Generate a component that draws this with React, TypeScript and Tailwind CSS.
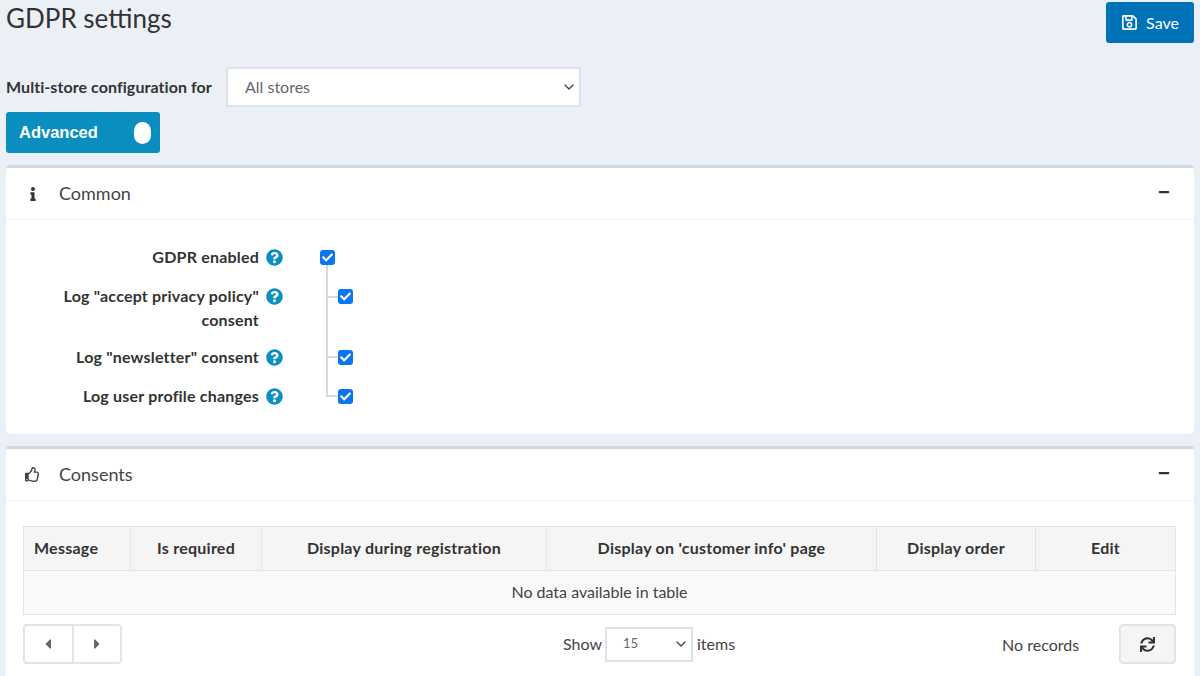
import React from 'react';
import { FaRegSave, FaInfo, FaRegThumbsUp, FaQuestionCircle, FaSync, FaMinus, FaCheck, FaCaretLeft, FaCaretRight } from 'react-icons/fa';
import { ChevronDown } from 'lucide-react';

const Help = () => <FaQuestionCircle className="text-[17px] text-[#0a8fc2] shrink-0" />;

const Check = () => (
  <span className="flex h-[15px] w-[15px] items-center justify-center rounded-[3px] bg-[#0a75f0]">
    <FaCheck className="text-[11px] text-white" />
  </span>
);

const CardHeader = ({ icon, title }: { icon: React.ReactNode; title: string }) => (
  <div className="flex h-[52px] items-center border-b border-[#f0f0f0] pl-[18px] pr-[24px]">
    <span className="flex w-[35px] items-center">{icon}</span>
    <span className="text-[18px] text-[#444]">{title}</span>
    <FaMinus className="ml-auto mb-[4px] text-[12px] text-[#333]" />
  </div>
);

const SettingRow = ({ label, second, nested, height }: { label: string; second?: string; nested?: boolean; height: string }) => (
  <div className={`flex items-start ${height}`}>
    <div className="-mt-[1px] w-[253px] text-right text-[16px] font-bold leading-[24px] tracking-[0.2px] text-[#333]">
      {label}
      {second && <div>{second}</div>}
    </div>
    <span className="ml-[7px] mt-[3px]"><Help /></span>
    <span className={`mt-[4px] ${nested ? 'ml-[55px]' : 'ml-[37px]'}`}><Check /></span>
  </div>
);

const th = 'border-r border-[#e4e4e4] pb-[2px] text-[16px] font-bold tracking-[0.25px] text-[#333]';

const App: React.FC = () => {
  return (
    <div className="h-[676px] overflow-hidden bg-[#ebeff6] px-[6px] font-['Lato','Noto_Sans',sans-serif] text-[#333]">
      <div className="flex h-[67px] items-start justify-between">
        <h1 className="text-[26px] leading-[36px] text-[#333]">GDPR settings</h1>
        <button className="mt-[2px] flex h-[41px] w-[88px] items-center justify-center gap-[8px] rounded-[3px] bg-[#0072b8] text-[16px] text-white">
          <FaRegSave className="text-[17px]" /> Save
        </button>
      </div>

      <div className="flex h-[40px] items-center">
        <span className="w-[220px] text-[16px] font-bold tracking-[0.07px] text-[#333]">Multi-store configuration for</span>
        <div className="flex h-[40px] w-[355px] items-center justify-between border-2 border-[#dde1e8] bg-white pl-[17px] pr-[2px] text-[16px] text-[#666]">
          All stores
          <ChevronDown size={16} className="text-[#444]" />
        </div>
      </div>

      <div className="mt-[5px] flex h-[41px] w-[154px] items-center justify-between rounded-[3px] bg-[#0a8ebf] pl-[13px] pr-[9px] font-['Liberation_Sans',sans-serif] text-[16.5px] font-bold text-white">
        Advanced
        <span className="h-[22px] w-[17px] rounded-[9px] bg-white" />
      </div>

      <div className="mt-[12px] h-[269px] rounded-[4px] border-t-[3px] border-[#d2d6de] bg-white">
        <CardHeader icon={<FaInfo className="ml-[2px] text-[14px] text-[#333]" />} title="Common" />
        <div className="relative pt-[26px]">
          <SettingRow label="GDPR enabled" height="h-[39px]" />
          <SettingRow label={'Log "accept privacy policy"'} second="consent" nested height="h-[61px]" />
          <SettingRow label={'Log "newsletter" consent'} nested height="h-[39px]" />
          <SettingRow label="Log user profile changes" nested height="h-[24px]" />
          <div className="absolute left-[320px] top-[45px] h-[132px] w-[12px] border-b-2 border-l-2 border-[#d9d9d9]" />
          <div className="absolute left-[320px] top-[76px] h-[2px] w-[12px] bg-[#d9d9d9]" />
          <div className="absolute left-[320px] top-[136px] h-[2px] w-[12px] bg-[#d9d9d9]" />
        </div>
      </div>

      <div className="mt-[12px] h-[240px] rounded-[4px] border-t-[3px] border-[#d2d6de] bg-white">
        <CardHeader icon={<FaRegThumbsUp className="ml-[1px] text-[15px] text-[#444]" />} title="Consents" />
        <div className="pl-[17px] pr-[18px] pt-[25px]">
          <div className="border border-[#e4e4e4] bg-[#f9f9f9]">
            <div className="flex h-[44px] items-center border-b border-[#e4e4e4] bg-[#f5f5f5] text-center">
              <div className={`flex h-full w-[107px] items-center pl-[10px] ${th}`}>Message</div>
              <div className={`flex h-full w-[131px] items-center justify-center ${th}`}>Is required</div>
              <div className={`flex h-full w-[285px] items-center justify-center ${th}`}>Display during registration</div>
              <div className={`flex h-full w-[330px] items-center justify-center ${th}`}>Display on 'customer info' page</div>
              <div className={`flex h-full w-[159px] items-center justify-center ${th}`}>Display order</div>
              <div className="flex h-full flex-1 items-center justify-center pb-[2px] text-[16px] font-bold tracking-[0.25px] text-[#333]">Edit</div>
            </div>
            <div className="flex h-[43px] items-center justify-center pb-[2px] text-[16px] text-[#444]">No data available in table</div>
          </div>

          <div className="mt-[9px] flex h-[40px] items-center">
            <div className="flex h-[40px] w-[99px] rounded-[4px] border-2 border-[#e4e4e4] text-[#666]">
              <span className="flex flex-1 items-center justify-center border-r-2 border-[#e4e4e4]"><FaCaretLeft className="text-[16px]" /></span>
              <span className="flex flex-1 items-center justify-center"><FaCaretRight className="text-[16px]" /></span>
            </div>
            <div className="ml-[441px] flex items-center text-[16px] text-[#444]">
              Show
              <div className="ml-[3px] mr-[4px] flex h-[35px] w-[88px] items-center justify-between border-2 border-[#dde1e8] pl-[16px] pr-[2px] text-[13px] text-[#666]">
                15
                <ChevronDown size={16} className="text-[#444]" />
              </div>
              items
            </div>
            <span className="ml-[267px] mt-[1px] text-[16px] text-[#444]">No records</span>
            <button className="ml-auto flex h-[40px] w-[57px] items-center justify-center rounded-[4px] border-2 border-[#e4e4e4] bg-[#f5f5f5]">
              <FaSync className="text-[15px] text-[#333]" />
            </button>
          </div>
        </div>
      </div>
    </div>
  );
};

export default App;
